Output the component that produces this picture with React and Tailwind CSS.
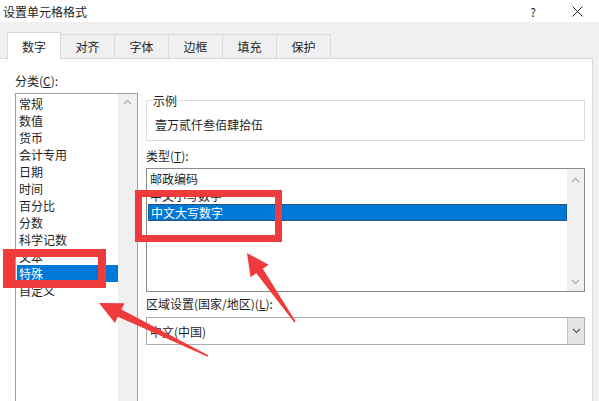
import React from 'react';

const CATEGORIES = ['常规', '数值', '货币', '会计专用', '日期', '时间', '百分比', '分数', '科学记数', '文本', '特殊', '自定义'];
const TYPES = ['邮政编码', '中文小写数字', '中文大写数字'];
const TABS = ['数字', '对齐', '字体', '边框', '填充', '保护'];

// tapered annotation arrow: wide head at the tip, thin tail
const arrowPoints = (tip, tail, L = 23, W = 11, w1 = 4, w2 = 0.8) => {
  const dx = tip[0] - tail[0];
  const dy = tip[1] - tail[1];
  const len = Math.hypot(dx, dy);
  const ux = dx / len;
  const uy = dy / len;
  const nx = -uy;
  const ny = ux;
  const bx = tip[0] - ux * L;
  const by = tip[1] - uy * L;
  const pts = [
    [tip[0], tip[1]],
    [bx + nx * W, by + ny * W],
    [bx + nx * w1, by + ny * w1],
    [tail[0] + nx * w2, tail[1] + ny * w2],
    [tail[0] - nx * w2, tail[1] - ny * w2],
    [bx - nx * w1, by - ny * w1],
    [bx - nx * W, by - ny * W],
  ];
  return pts.map((p) => p.map((v) => v.toFixed(1)).join(',')).join(' ');
};

function ChevronUp() {
  return (
    <svg width="9" height="6" viewBox="0 0 9 6" className="block">
      <path d="M1 5 L4.5 1.5 L8 5" fill="none" stroke="#a6a6a6" strokeWidth="1.1" />
    </svg>
  );
}

function ChevronDown({ color = '#a6a6a6' }) {
  return (
    <svg width="9" height="6" viewBox="0 0 9 6" className="block">
      <path d="M1 1 L4.5 4.5 L8 1" fill="none" stroke={color} strokeWidth="1.1" />
    </svg>
  );
}

export default function App() {
  return (
    <div className="relative w-[599px] h-[401px] overflow-hidden bg-[#f0f0f0] text-[12px] leading-[17px] text-[#1f1f1f] font-['Noto_Sans_CJK_SC','Microsoft_YaHei',sans-serif]">
      {/* title bar */}
      <div className="flex h-[22px] items-center bg-white pl-[3px]">
        <span>设置单元格格式</span>
        <span className="ml-auto mr-[36px] text-[12px]">?</span>
        <svg width="11" height="11" viewBox="0 0 11 11" className="mr-[16px]">
          <path d="M0.5 0.5 L10.5 10.5 M10.5 0.5 L0.5 10.5" stroke="#222" strokeWidth="1" />
        </svg>
      </div>

      {/* tabs */}
      <div className="flex items-end pl-[7px] pt-[10px]">
        {TABS.map((t, i) =>
          i === 0 ? (
            <div
              key={t}
              className="relative z-10 -mb-px flex h-[27px] w-[54px] items-center justify-center border border-b-0 border-[#d9d9d9] bg-white"
            >
              {t}
            </div>
          ) : (
            <div
              key={t}
              className="flex h-[24px] w-[54px] items-center justify-center border border-b-0 border-l-0 border-[#d9d9d9] bg-[#f0f0f0]"
            >
              {t}
            </div>
          )
        )}
      </div>

      {/* page */}
      <div className="flex h-[345px] w-[593px] border-t border-r border-[#d9d9d9] bg-white">
        {/* category column */}
        <div className="ml-[15px] flex flex-col pt-[13px]">
          <div>
            分类(<span className="underline">C</span>):
          </div>
          <div className="mt-[4px] flex h-[320px] w-[123px] border border-[#a0a0a0]">
            <div className="flex-1 pt-[1px]">
              {CATEGORIES.map((c) => (
                <div
                  key={c}
                  className={
                    c === '特殊'
                      ? 'ml-[1px] h-[17px] bg-[#0078d7] pl-[2px] text-white'
                      : 'h-[17px] pl-[3px]'
                  }
                >
                  {c}
                </div>
              ))}
            </div>
            <div className="flex w-[19px] justify-center bg-[#f0f0f0] pt-[5px]">
              <ChevronUp />
            </div>
          </div>
        </div>

        {/* right column */}
        <div className="ml-[8px] flex w-[439px] flex-col">
          <fieldset className="mt-[33px] border border-[#dcdcdc] px-[6px] pb-[7px]">
            <legend className="leading-[17px]">示例</legend>
            <div className="mt-[7px] pl-[2px]">壹万贰仟叁佰肆拾伍</div>
          </fieldset>

          <div className="mt-[6px]">
            类型(<span className="underline">T</span>):
          </div>
          <div className="mt-[4px] flex h-[124px] border border-[#8a8a8a]">
            <div className="flex-1 pt-[1px]">
              {TYPES.map((t) => (
                <div
                  key={t}
                  className={
                    t === '中文大写数字'
                      ? 'ml-[1px] h-[17px] border border-dotted border-[#1d3f66] bg-[#0078d7] pl-[2px] leading-[15px] text-white'
                      : 'h-[17px] pl-[3px]'
                  }
                >
                  {t}
                </div>
              ))}
            </div>
            <div className="flex w-[17px] flex-col items-center justify-between bg-[#f0f0f0] pb-[6px] pt-[8px]">
              <ChevronUp />
              <ChevronDown />
            </div>
          </div>

          <div className="mt-[3px]">
            区域设置(国家/地区)(<span className="underline">L</span>):
          </div>
          <div className="mt-[5px] flex h-[28px] border border-[#adadad] bg-white">
            <div className="flex flex-1 items-center pl-[3px]">中文(中国)</div>
            <div className="flex w-[17px] items-center justify-center border-l border-[#c4c4c4] bg-[#e5e5e5]">
              <ChevronDown color="#555" />
            </div>
          </div>
        </div>
      </div>

      {/* annotations drawn over the dialog */}
      <svg className="pointer-events-none absolute left-0 top-0" width="599" height="401" viewBox="0 0 599 401">
        <path
          fillRule="evenodd"
          fill="#ef3b3b"
          d="M135 190 H282 V242 H135 Z M142 197 V235 H275 V197 Z"
        />
        <path
          fillRule="evenodd"
          fill="#ef3b3b"
          d="M3 249 H106 V288 H3 Z M15 257 V280 H98 V257 Z"
        />
        <polygon fill="#ef3b3b" points={arrowPoints([99, 303], [208, 356])} />
        <polygon fill="#ef3b3b" points={arrowPoints([247, 253], [295, 322], 22)} />
      </svg>
    </div>
  );
}
